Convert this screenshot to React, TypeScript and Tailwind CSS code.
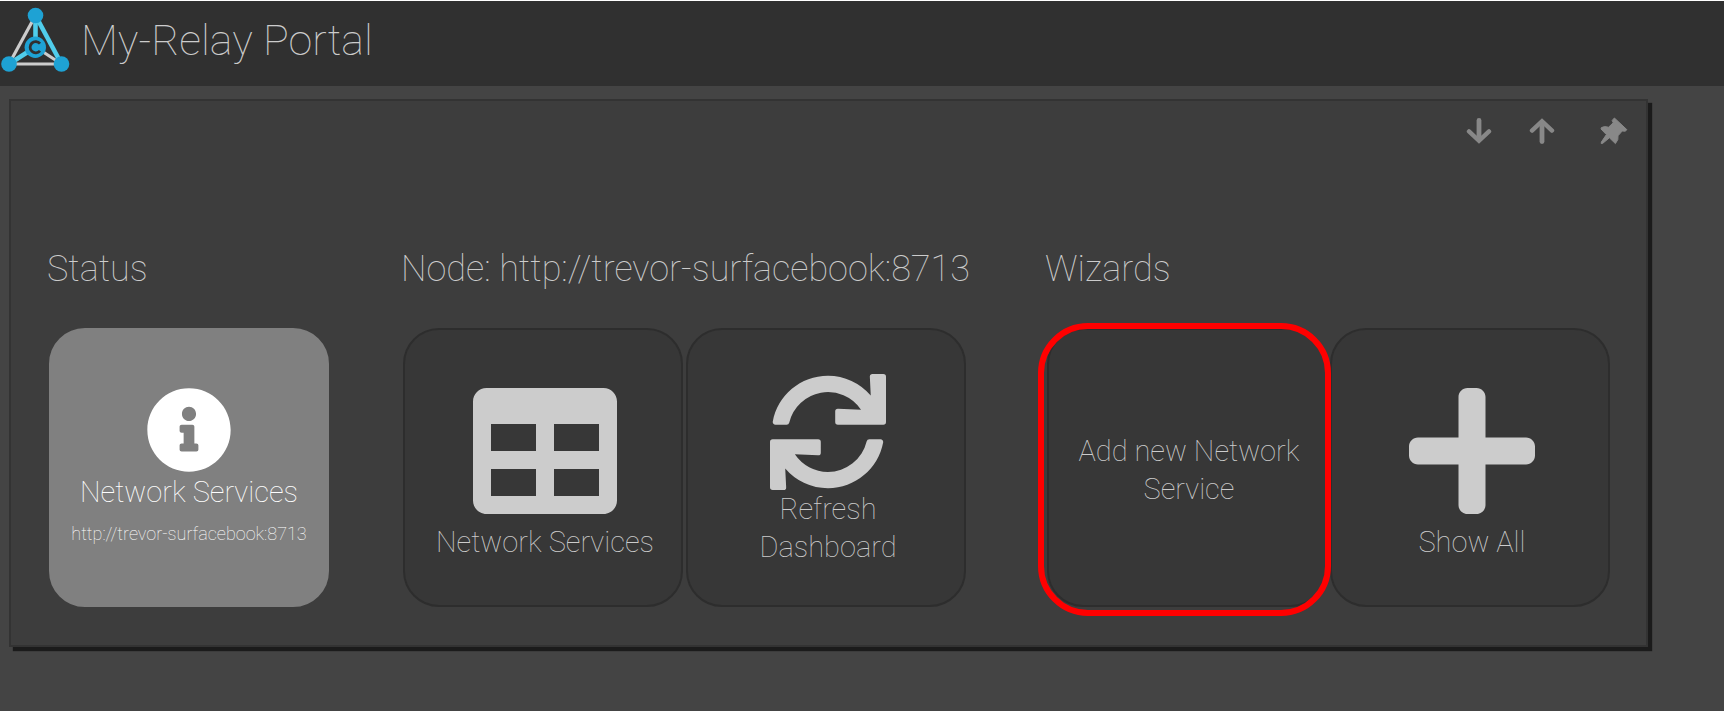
import type { ReactNode } from "react";
import { FaInfoCircle, FaTable, FaSync, FaPlus } from "react-icons/fa";

function Logo() {
  return (
    <svg viewBox="0 3 72 74" className="h-[74px] w-[72px] shrink-0" aria-hidden="true">
      <g strokeWidth="3.2" stroke="#cccccc">
        <path d="M35.5 15.5 9 64" />
        <path d="M9 64H61.5" />
        <path d="M35.5 47 61.5 64" />
      </g>
      <g strokeWidth="4.6" stroke="#50cdeb">
        <path d="M35.5 15.5 61.5 64" />
        <path d="M35.5 15.5V47" />
        <path d="M35.5 47 9 64" />
      </g>
      <g fill="#1ea2d4">
        <circle cx="35.5" cy="15.5" r="7.8" />
        <circle cx="9" cy="64" r="7.8" />
        <circle cx="61.5" cy="64" r="7.8" />
        <circle cx="35.3" cy="47.2" r="10.7" />
      </g>
      <path d="M40 43.6A5.6 5.6 0 1 0 40 50.8" fill="none" stroke="#303030" strokeWidth="2.8" />
    </svg>
  );
}

function ArrowDown({ className = "" }: { className?: string }) {
  return (
    <svg
      viewBox="0 0 26 26"
      className={`size-[26px] ${className}`}
      fill="none"
      stroke="currentColor"
      strokeWidth="4.4"
      strokeLinecap="round"
      aria-hidden="true"
    >
      <path d="M13 2.4V21" strokeWidth="4.8" />
      <path d="M3 13.4 13 22.8 23 13.4" />
    </svg>
  );
}

function Pin() {
  return (
    <svg
      viewBox="0 0 28 28"
      className="size-7"
      fill="currentColor"
      stroke="currentColor"
      strokeWidth="1"
      strokeLinejoin="round"
      aria-hidden="true"
    >
      <path d="M14.4 1 26.8 12.6 25.4 14.2 22.2 14 18 18.8 17.8 22.6 15.4 26.6 9.4 20.8 2.4 26.6 1.2 26.4 1.4 25 6.4 17.6 1 12 1.4 10.6 4.6 9.6 8.6 10.2 13.2 5.8 12.2 3.4Z" />
    </svg>
  );
}

function Group({ title, children }: { title: string; children: ReactNode }) {
  return (
    <section className="shrink-0">
      <h2 className="pr-[3px] text-[36px] leading-[44px] font-thin">{title}</h2>
      <div className="mt-[37px] flex gap-[3px] pl-[2px]">{children}</div>
    </section>
  );
}

function Tile({ active = false, marked = false, children }: { active?: boolean; marked?: boolean; children: ReactNode }) {
  return (
    <button
      type="button"
      className={`relative flex h-[279px] w-[280px] flex-col items-center justify-center rounded-[36px] border-2 pt-[5px] text-[29px] leading-[38px] font-thin ${
        active ? "border-[#808080] bg-[#808080] px-5 text-white" : "border-[#2d2d2d] bg-[#373737] pr-[18px] pl-[22px]"
      } ${marked ? "z-10" : ""}`}
    >
      {children}
      {marked && (
        <span className="pointer-events-none absolute -top-[7px] -right-[6px] -bottom-[11px] -left-[11px] rounded-[50px] border-6 border-[#ff0000]" />
      )}
    </button>
  );
}

export default function App() {
  return (
    <div className="min-h-screen border-t border-b-2 border-white bg-[#444444] font-[Roboto,sans-serif] text-[#cccccc]">
      <header className="flex h-[85px] items-center bg-[#303030] pb-2">
        <Logo />
        <h1 className="pl-[9px] text-[43px] leading-[60px] font-thin">My-Relay Portal</h1>
      </header>
      <main className="pt-[13px] pb-14 pl-[9px]">
        <div className="w-fit border-2 border-[#333333] bg-[#3d3d3d] pr-9 pb-[38px] pl-9 shadow-[4px_4px_1px_#1b1b1b]">
          <div className="-mr-[18px] flex items-center justify-end pt-4 text-[#888888]">
            <button type="button" aria-label="Move down">
              <ArrowDown />
            </button>
            <button type="button" aria-label="Move up" className="ml-[37px]">
              <ArrowDown className="rotate-180" />
            </button>
            <button type="button" aria-label="Pin" className="ml-[45px]">
              <Pin />
            </button>
          </div>
          <div className="flex gap-[72px] pt-[102px]">
            <Group title="Status">
              <Tile active>
                <FaInfoCircle className="size-[86px] shrink-0" />
                <span>Network Services</span>
                <span className="pt-1 text-lg leading-[38px] whitespace-nowrap">http://trevor-surfacebook:8713</span>
              </Tile>
            </Group>
            <Group title="Node: http://trevor-surfacebook:8713">
              <Tile>
                <FaTable className="size-36 shrink-0" />
                <span>Network Services</span>
              </Tile>
              <Tile>
                <FaSync className="size-29 shrink-0" />
                <span>
                  Refresh
                  <br />
                  Dashboard
                </span>
              </Tile>
            </Group>
            <Group title="Wizards">
              <Tile marked>
                <span>Add new Network Service</span>
              </Tile>
              <Tile>
                <FaPlus className="size-36 shrink-0" />
                <span>Show All</span>
              </Tile>
            </Group>
          </div>
        </div>
      </main>
    </div>
  );
}
